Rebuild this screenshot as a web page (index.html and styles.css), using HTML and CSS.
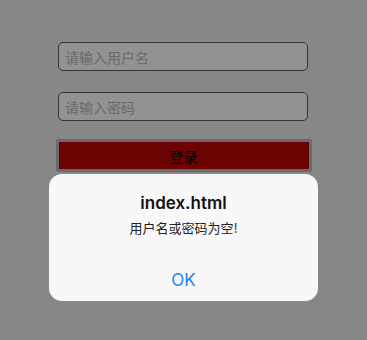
FILE: index.html
```html
<!DOCTYPE html>
<html lang="zh">
<head>
<meta charset="utf-8">
<link rel="stylesheet" href="styles.css">
</head>
<body>
<div class="page">
  <div class="form">
    <div class="field"><span class="ph">请输入用户名</span></div>
    <div class="field"><span class="ph">请输入密码</span></div>
    <div class="btn"><span>登录</span></div>
  </div>
</div>
<div class="alert">
  <div class="title">index.html</div>
  <div class="msg">用户名或密码为空!</div>
  <div class="ok">OK</div>
</div>
</body>
</html>
```
FILE: styles.css
```css
html, body {
  margin: 0;
  padding: 0;
  width: 367px;
  height: 340px;
  overflow: hidden;
  background: #878787;
  font-family: "Noto Sans CJK SC", "Noto Sans", sans-serif;
}
.page {
  padding-top: 42px;
}
.form {
  display: flex;
  flex-direction: column;
  align-items: center;
  gap: 21px;
}
.field {
  box-sizing: border-box;
  width: 250px;
  height: 29px;
  margin-right: 1px;
  border: 1px solid #353535;
  border-radius: 5px;
  background: #929292;
  display: flex;
  align-items: center;
  padding-left: 6px;
}
.ph {
  font-size: 14px;
  color: #6a6a6a;
  line-height: 1;
}
.btn {
  box-sizing: border-box;
  width: 256px;
  height: 33px;
  margin-top: -3px;
  border: 3px solid #6b6b6b;
  border-radius: 2px;
  background: #6d0202;
  display: flex;
  align-items: center;
  justify-content: center;
}
.btn span {
  font-size: 14px;
  color: #000;
  line-height: 1;
}
.alert {
  position: absolute;
  left: 49px;
  top: 174px;
  width: 269px;
  height: 127px;
  box-sizing: border-box;
  background: #f8f8f9;
  border-radius: 13px;
  display: flex;
  flex-direction: column;
  align-items: center;
  padding-top: 19px;
}
.title {
  font-family: "Inter", "Noto Sans", sans-serif;
  font-weight: 600;
  font-size: 17px;
  line-height: 20px;
  color: #111;
}
.msg {
  margin-top: 7px;
  font-size: 13px;
  line-height: 16px;
  color: #222;
}
.ok {
  margin-top: 34px;
  font-family: "Inter", "Noto Sans", sans-serif;
  font-size: 17px;
  line-height: 20px;
  color: #1a82fb;
}
```
